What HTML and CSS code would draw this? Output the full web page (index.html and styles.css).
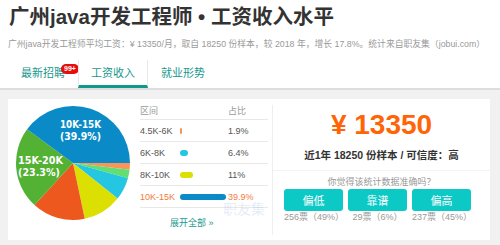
FILE: index.html
```html
<!DOCTYPE html>
<html lang="zh-CN">
<head>
  <meta charset="UTF-8" />
  <title>广州java开发工程师工资收入水平</title>
  <link rel="stylesheet" href="styles.css">
</head>
<body>
  <div class="top">
    <h1>广州java开发工程师 • 工资收入水平</h1>
    <p class="subtitle">广州java开发工程师平均工资：¥ 13350/月，取自 18250 份样本，较 2018 年，增长 17.8%。统计来自职友集（jobui.com）</p>
    <div class="tabs">
      <div class="tab">最新招聘<span class="badge">99+</span></div>
      <div class="tab active">工资收入</div>
      <div class="tab">就业形势</div>
    </div>
  </div>

  <div class="main">
    <div class="card">
      <svg class="pie" width="130" height="141" viewBox="8 99 130 141">
        <path d="M73 163 L130 163 A57 57 0 0 1 129.59 169.79 Z" fill="#f9955b" />
        <path d="M73 163 L129.59 169.79 A57 57 0 0 1 127.93 178.21 Z" fill="#63df72" />
        <path d="M73 163 L127.93 178.21 A57 57 0 0 1 117.58 198.52 Z" fill="#24c6e2" />
        <path d="M73 163 L117.58 198.52 A57 57 0 0 1 84.74 218.78 Z" fill="#dbdf02" />
        <path d="M73 163 L84.74 218.78 A57 57 0 0 1 34.51 205.04 Z" fill="#ec581d" />
        <path d="M73 163 L34.51 205.04 A57 57 0 0 1 27.09 129.21 Z" fill="#53b133" />
        <path d="M73 163 L27.09 129.21 A57 57 0 0 1 130 163 Z" fill="#0a8bc8" />
        <g class="pie-label">
          <text x="60" y="128" textLength="41" lengthAdjust="spacingAndGlyphs">10K-15K</text>
          <text x="60" y="140" textLength="41" lengthAdjust="spacingAndGlyphs">(39.9%)</text>
          <text x="18" y="164" textLength="45" lengthAdjust="spacingAndGlyphs">15K-20K</text>
          <text x="18" y="176" textLength="42" lengthAdjust="spacingAndGlyphs">(23.3%)</text>
        </g>
      </svg>

      <div class="dist">
        <div class="row head"><span class="range">区间</span><span class="bar-cell"></span><span class="pct">占比</span></div>
        <div class="row"><span class="range">4.5K-6K</span><span class="bar-cell"><i class="bar" style="width: 2px; background: #f9955b;"></i></span><span class="pct">1.9%</span></div>
        <div class="row"><span class="range">6K-8K</span><span class="bar-cell"><i class="bar" style="width: 8px; background: #24c6e2;"></i></span><span class="pct">6.4%</span></div>
        <div class="row"><span class="range">8K-10K</span><span class="bar-cell"><i class="bar" style="width: 13px; background: #dbdf02;"></i></span><span class="pct">11%</span></div>
        <div class="row hot"><span class="range">10K-15K</span><span class="bar-cell"><i class="bar" style="width: 46px; background: #0a8bc8;"></i></span><span class="pct">39.9%</span></div>
        <a class="more" href="#">展开全部 »</a>
        <span class="watermark">职友集</span>
      </div>

      <div class="sep"></div>

      <div class="stat">
        <div class="price">¥ 13350</div>
        <div class="sample">近1年 18250 份样本 / 可信度：高</div>
        <div class="poll">
          <div class="question">你觉得该统计数据准确吗？</div>
          <div class="votes">
            <div class="vote"><button>偏低</button><span>256票（49%）</span></div>
            <div class="vote"><button>靠谱</button><span>29票（6%）</span></div>
            <div class="vote"><button>偏高</button><span>237票（45%）</span></div>
          </div>
        </div>
      </div>
    </div>
  </div>
</body>
</html>
```

FILE: styles.css
```css
body {
  margin: 0;
  font-family: "Liberation Sans", "Noto Sans CJK SC", sans-serif;
  background: #fff;
  color: #333;
  width: 500px;
  height: 245px;
  overflow: hidden;
}
.top {
  padding: 5px 8px 0;
}
h1 {
  margin: 0 0 0 1px;
  font-size: 20.5px;
  line-height: 24px;
  font-weight: bold;
  color: #333;
}
.subtitle {
  margin: 8px 0 0;
  font-size: 8.8px;
  line-height: 14px;
  color: #999;
  white-space: nowrap;
}
.tabs {
  display: flex;
  margin: 9px -8px 0;
  padding-left: 8px;
  border-bottom: 2px solid #ddd;
}
.tab {
  position: relative;
  box-sizing: border-box;
  width: 70px;
  height: 28px;
  line-height: 26px;
  text-align: center;
  font-size: 11px;
  color: #17978d;
}
.tab.active {
  border-left: 1px solid #e8e8e8;
  border-right: 1px solid #e8e8e8;
  border-bottom: 3px solid #12978c;
}
.badge {
  position: absolute;
  left: 53px;
  top: 4px;
  height: 10px;
  padding: 0 3px;
  border-radius: 6px;
  background: #e50d0d;
  color: #fff;
  font-size: 7px;
  font-weight: bold;
  line-height: 10px;
}
.main {
  background: #f1f1f1;
  padding: 9px 10px 5px 8px;
  height: 141px;
}
.card {
  display: flex;
  height: 141px;
  background: #fff;
}
.pie {
  display: block;
  flex: none;
}
.pie-label text {
  fill: #fff;
  font-family: "DejaVu Sans", sans-serif;
  font-weight: bold;
  font-size: 11px;
}
.dist {
  position: relative;
  width: 128px;
  margin-left: 2px;
  padding-top: 3px;
  font-size: 9px;
  color: #555;
}
.row {
  display: flex;
  align-items: center;
  height: 21px;
  border-bottom: 1px solid #e8e8e8;
}
.row.head {
  height: 17px;
  color: #999;
}
.range {
  width: 40px;
}
.bar-cell {
  width: 48px;
  display: flex;
  align-items: center;
}
.bar {
  display: block;
  height: 6px;
  border-radius: 3px;
}
.row.hot {
  color: #f47b3c;
}
.more {
  display: block;
  padding-left: 30px;
  margin-top: 8px;
  font-size: 9px;
  color: #1a9a90;
  text-decoration: none;
}
.watermark {
  position: absolute;
  left: 83px;
  top: 99px;
  font-size: 14px;
  color: rgba(90, 140, 220, 0.18);
}
.sep {
  width: 1px;
  margin: 6px 0 5px 4px;
  background: #eee;
}
.stat {
  flex: 1;
  text-align: center;
}
.price {
  margin-top: 12px;
  font-size: 28px;
  line-height: 28px;
  font-weight: bold;
  color: #ff6407;
}
.sample {
  margin-top: 9px;
  font-size: 10.5px;
  line-height: 14px;
  font-weight: bold;
  color: #333;
}
.poll {
  margin-top: 8px;
  border-top: 1px solid #f3f3f3;
  padding-top: 5px;
}
.question {
  font-size: 9px;
  line-height: 12px;
  color: #999;
}
.votes {
  display: flex;
  gap: 5px;
  padding-left: 11px;
  margin-top: 1px;
}
.vote {
  width: 59px;
  display: flex;
  flex-direction: column;
  align-items: center;
}
.vote button {
  width: 59px;
  height: 22px;
  border: none;
  border-radius: 3px;
  background: #0cc9c6;
  color: #fff;
  font-family: "Noto Sans CJK SC", sans-serif;
  font-size: 11px;
  padding: 0;
}
.vote span {
  font-size: 9px;
  line-height: 10px;
  margin-top: 1px;
  color: #999;
}
```
